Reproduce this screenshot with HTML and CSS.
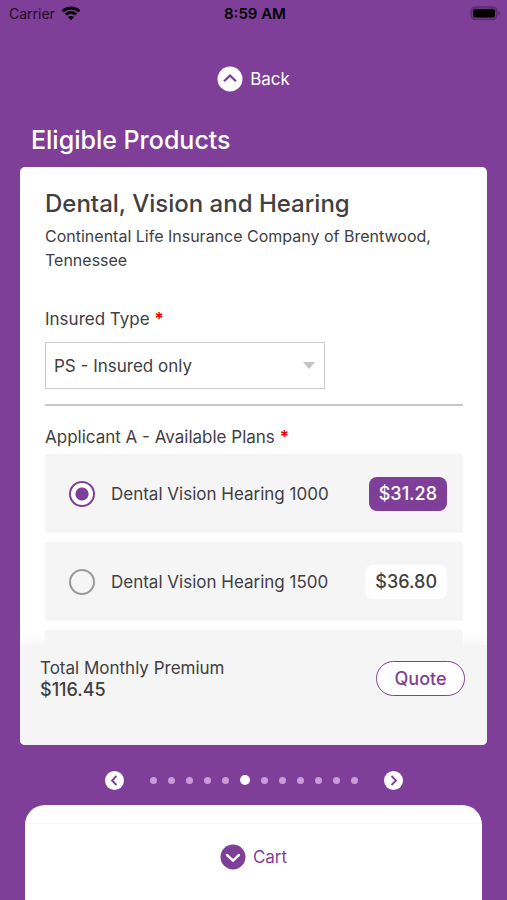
FILE: index.html
```html
<!DOCTYPE html>
<html lang="en">
<head>
<meta charset="utf-8">
<meta name="viewport" content="width=device-width, initial-scale=1">
<title>Eligible Products</title>
<link rel="stylesheet" href="styles.css">
</head>
<body>
<div class="status">
  <div class="carrier">
    <span>Carrier</span>
    <svg width="20" height="15" viewBox="0 0 20 15" fill="none" stroke="#000" stroke-width="2.8">
      <path d="M1.6 5.2C6.2.9 13.8.9 18.4 5.2"/>
      <path d="M4.7 8.5C7.7 5.8 12.3 5.8 15.3 8.5"/>
      <path d="M10 14.2L6.9 11.1C8.6 9.6 11.4 9.6 13.1 11.1Z" fill="#000" stroke="none"/>
    </svg>
  </div>
  <span class="time">8:59 AM</span>
  <svg class="battery" width="31" height="15" viewBox="0 0 31 15">
    <rect x="1" y="1" width="26" height="12.5" rx="4" fill="#6a3480" stroke="#5c2d70" stroke-width="1.4"/>
    <rect x="3" y="3" width="22" height="8.5" rx="2" fill="#000"/>
    <path d="M28.5 5C30.6 5.7 30.6 8.8 28.5 9.5Z" fill="#5c2d70"/>
  </svg>
</div>
<button class="toggle back" type="button">
  <svg width="26" height="26" viewBox="0 0 26 26"><circle cx="13" cy="13" r="12.5" fill="#fff"/><path d="M7 15.2L13 9.6L19 15.2" fill="none" stroke="#7f3f98" stroke-width="2.2"/></svg>
  <span>Back</span>
</button>
<h1>Eligible Products</h1>
<main class="card">
  <div class="content">
    <h2>Dental, Vision and Hearing</h2>
    <p class="company">Continental Life Insurance Company of Brentwood, Tennessee</p>
    <label class="label" for="insured">Insured Type <span class="req">*</span></label>
    <div class="select">
      <select id="insured"><option>PS - Insured only</option></select>
      <svg width="12" height="7" viewBox="0 0 12 7"><path d="M0 0H12L6 7Z" fill="#c4c4c4"/></svg>
    </div>
    <hr>
    <fieldset>
      <legend class="label">Applicant A - Available Plans <span class="req">*</span></legend>
      <label class="plan">
        <input type="radio" name="plan" checked>
        <span class="name">Dental Vision Hearing 1000</span>
        <span class="price selected">$31.28</span>
      </label>
      <label class="plan">
        <input type="radio" name="plan">
        <span class="name">Dental Vision Hearing 1500</span>
        <span class="price">$36.80</span>
      </label>
      <div class="peek"></div>
    </fieldset>
  </div>
  <div class="total">
    <div>
      <div class="caption">Total Monthly Premium</div>
      <div class="amount">$116.45</div>
    </div>
    <button class="quote" type="button">Quote</button>
  </div>
</main>
<nav class="pager">
  <button type="button" aria-label="Previous"><svg width="19" height="19" viewBox="0 0 19 19"><circle cx="9.5" cy="9.5" r="9.5" fill="#fff"/><path d="M11.5 5L7 9.5L11.5 14" fill="none" stroke="#7f3f98" stroke-width="1.8"/></svg></button>
  <div class="dots"><i></i><i></i><i></i><i></i><i></i><i class="current"></i><i></i><i></i><i></i><i></i><i></i><i></i></div>
  <button type="button" aria-label="Next"><svg width="19" height="19" viewBox="0 0 19 19"><circle cx="9.5" cy="9.5" r="9.5" fill="#fff"/><path d="M7.5 5L12 9.5L7.5 14" fill="none" stroke="#7f3f98" stroke-width="1.8"/></svg></button>
</nav>
<footer class="cart">
  <button class="toggle" type="button">
    <svg width="26" height="26" viewBox="0 0 26 26"><circle cx="13" cy="13" r="12.5" fill="#7f3f98"/><path d="M7 11L13 16.6L19 11" fill="none" stroke="#fff" stroke-width="2.4" stroke-linecap="round"/></svg>
    <span>Cart</span>
  </button>
</footer>
</body>
</html>
```
FILE: styles.css
```css
* { box-sizing: border-box; }
body {
  margin: 0;
  min-height: 100vh;
  display: flex;
  flex-direction: column;
  background: #7f3f98;
  color: #414042;
  font: 17px/24px Inter, "Liberation Sans", sans-serif;
}
button, select { font: inherit; color: inherit; }
button { border: 0; padding: 0; background: none; }
svg { display: block; flex: none; }
.status {
  display: grid;
  grid-template-columns: 1fr auto 1fr;
  align-items: center;
  height: 27px;
  padding: 0 6px 0 9px;
  color: #000;
}
.carrier { display: flex; align-items: center; gap: 6px; color: #1d0b25; font-size: 14px; }
.time { font-size: 15px; font-weight: 600; }
.battery { justify-self: end; }
.toggle {
  display: flex;
  align-items: center;
  align-self: center;
  gap: 7px;
  height: 26px;
}
.back { margin-top: 39px; color: #fff; }
h1 {
  margin: 33px 31px 12px;
  color: #fff;
  font-size: 25px;
  line-height: 30px;
  font-weight: 500;
}
.card {
  flex: 1;
  display: flex;
  flex-direction: column;
  margin: 0 20px;
  border-radius: 5px;
  background: #fff;
  overflow: hidden;
}
.content { padding: 21px 24px 0 25px; }
h2 { margin: 0; font-size: 24px; line-height: 32px; font-weight: 500; }
.company { margin: 4px 0 34px; font-size: 16px; }
.label { display: block; padding: 0; line-height: 26px; }
.req { color: #e60000; font-weight: 600; }
.select {
  display: grid;
  align-items: center;
  width: 67%;
  margin-top: 10px;
}
.select > * { grid-area: 1 / 1; }
.select svg { justify-self: end; margin-right: 10px; pointer-events: none; }
select {
  appearance: none;
  width: 100%;
  height: 47px;
  padding: 0 8px;
  border: 1px solid #ccc;
  border-radius: 0;
  background: #fff;
}
hr { height: 2px; margin: 15px 0 18px; border: 0; background: #c8c8c8; }
fieldset { margin: 0; padding: 0; border: 0; min-width: 0; }
legend { margin-bottom: 4px; }
.plan {
  display: flex;
  align-items: center;
  height: 79px;
  margin-bottom: 9px;
  padding: 0 16px 0 24px;
  background: #f5f5f5;
}
input {
  appearance: none;
  flex: none;
  width: 26px;
  height: 26px;
  margin: 0 16px 0 0;
  border: 2px solid #999;
  border-radius: 50%;
}
input:checked {
  border-color: #7f3f98;
  background: radial-gradient(circle, #7f3f98 6px, #fff 7px);
}
.name { flex: 1; }
.price {
  padding: 5px 10px;
  border-radius: 8px;
  background: #fff;
  font-size: 18px;
  font-weight: 500;
}
.selected { background: #7f3f98; color: #fff; }
.peek { height: 15px; background: #f5f5f5; }
.total {
  flex: 1;
  display: flex;
  align-items: flex-start;
  justify-content: space-between;
  min-height: 100px;
  padding: 12px 22px 0 20px;
  background: #f5f5f5;
  box-shadow: 0 0 12px 4px #f5f5f5;
  line-height: 22px;
}
.amount { font-size: 18px; font-weight: 500; }
.quote {
  width: 89px;
  height: 35px;
  margin-top: 4px;
  border: 1px solid #7f3f98;
  border-radius: 18px;
  background: #fff;
  color: #7f3f98;
  font-size: 18px;
  font-weight: 500;
}
.pager {
  display: flex;
  align-items: center;
  justify-content: center;
  gap: 26px;
  height: 60px;
  padding-top: 10px;
}
.dots { display: flex; align-items: center; gap: 11px; }
.dots i { width: 7px; height: 7px; border-radius: 50%; background: #c99bd9; }
.dots .current { width: 10px; height: 10px; background: #fff; }
.cart {
  display: flex;
  flex-direction: column;
  height: 95px;
  margin: 0 25px;
  border-radius: 20px 20px 0 0;
  background: linear-gradient(#fff 18px, #f8f8f8 18px, #f8f8f8 19px, #fff 19px);
  color: #7f3f98;
}
.cart .toggle { margin-top: 39px; }
```
